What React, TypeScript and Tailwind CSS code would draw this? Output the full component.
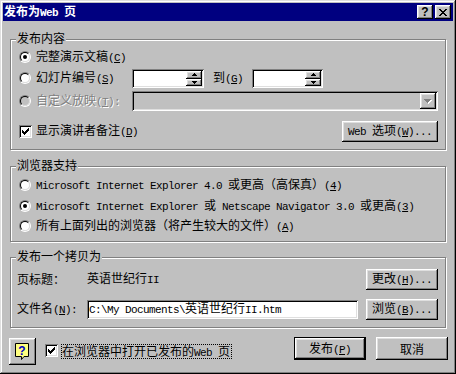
import React from "react";

const M = "font-['Liberation_Mono',monospace] text-[11px] tracking-[-0.6px]";
const RAISED =
  "bg-[#c0c0c0] shadow-[inset_-1px_-1px_#000,inset_1px_1px_#fff,inset_-2px_-2px_#808080,inset_2px_2px_#dfdfdf]";
const SUNKEN =
  "shadow-[inset_1px_1px_#808080,inset_-1px_-1px_#fff,inset_2px_2px_#000,inset_-2px_-2px_#dfdfdf]";
const ETCH = "border border-[#808080] shadow-[inset_1px_1px_#fff,1px_1px_#fff]";
const DIS = "text-[#808080] [text-shadow:1px_1px_0_#fff]";

function L({ children }: { children: React.ReactNode }) {
  return <span className={M}>{children}</span>;
}

function Acc({ k, tail = "" }: { k: string; tail?: string }) {
  return (
    <span className={M}>
      (<span className="underline underline-offset-[1px]">{k}</span>){tail}
    </span>
  );
}

function Pixels({ map, color, dx = 0, dy = 0 }: { map: string[]; color: string; dx?: number; dy?: number }) {
  const rects: React.ReactNode[] = [];
  map.forEach((row, y) => {
    for (let x = 0; x < row.length; x++) {
      if (row[x] === "X")
        rects.push(<rect key={`${x}-${y}`} x={x + dx} y={y + dy} width={1} height={1} fill={color} />);
    }
  });
  return <>{rects}</>;
}

function Radio({ checked, disabled }: { checked?: boolean; disabled?: boolean }) {
  return (
    <div className="w-[12px] h-[12px] shrink-0 rounded-full border border-t-[#808080] border-l-[#808080] border-r-white border-b-white">
      <div
        className={`w-[10px] h-[10px] rounded-full border border-t-black border-l-black border-r-[#dfdfdf] border-b-[#dfdfdf] flex items-center justify-center ${
          disabled ? "bg-[#c0c0c0]" : "bg-white"
        }`}
      >
        {checked && <div className="w-[4px] h-[4px] rounded-full bg-black" />}
      </div>
    </div>
  );
}

const CHECK = ["......X", ".....XX", "X...XXX", "XX.XXX.", "XXXXX..", ".XXX...", "..X...."];

function Check() {
  return (
    <div className={`w-[13px] h-[13px] shrink-0 bg-white ${SUNKEN}`}>
      <svg width="13" height="13" viewBox="0 0 13 13" shapeRendering="crispEdges">
        <Pixels map={CHECK} color="#000" dx={3} dy={3} />
      </svg>
    </div>
  );
}

function SpinArrow({ up }: { up?: boolean }) {
  return (
    <svg width="5" height="3" viewBox="0 0 5 3" shapeRendering="crispEdges">
      <Pixels map={up ? ["..X..", ".XXX.", "XXXXX"] : ["XXXXX", ".XXX.", "..X.."]} color="#000" />
    </svg>
  );
}

function SpinField({ w }: { w: string }) {
  return (
    <div className={`${w} h-[19px] p-[2px] bg-white ${SUNKEN} flex shrink-0`}>
      <div className="flex-1" />
      <div className="w-[16px] flex flex-col">
        <div className={`h-[8px] ${RAISED} flex items-center justify-center`}>
          <SpinArrow up />
        </div>
        <div className={`h-[7px] ${RAISED} flex items-center justify-center`}>
          <SpinArrow />
        </div>
      </div>
    </div>
  );
}

function Btn({ className, children, def }: { className: string; children: React.ReactNode; def?: boolean }) {
  if (def) {
    return (
      <div className={`${className} border border-black shrink-0 flex`}>
        <div className={`flex-1 ${RAISED} flex items-center justify-center`}>{children}</div>
      </div>
    );
  }
  return <div className={`${className} ${RAISED} shrink-0 flex items-center justify-center`}>{children}</div>;
}

function Legend({ children }: { children: React.ReactNode }) {
  return (
    <div className="absolute left-[5px] top-[-8px] px-[1px] bg-[#c0c0c0] leading-[12px] h-[13px]">{children}</div>
  );
}

const XMAP = ["XX....XX", ".XX..XX.", "..XXXX..", "...XX...", "..XXXX..", ".XX..XX.", "XX....XX"];

function TitleBar() {
  return (
    <div className="h-[18px] bg-[#000080] flex items-center pl-[1px] pr-[2px]">
      <span className="text-white font-bold text-[12px] leading-[12px]">
        发布为<span className={`${M} font-bold`}>Web </span>页
      </span>
      <div className="ml-auto flex gap-[2px]">
        <div className={`w-[16px] h-[14px] ${RAISED} flex items-center justify-center`}>
          <span className="font-['Liberation_Sans',sans-serif] font-bold text-[12px] leading-none">?</span>
        </div>
        <div className={`w-[16px] h-[14px] ${RAISED} flex items-center justify-center`}>
          <svg width="8" height="7" viewBox="0 0 8 7" shapeRendering="crispEdges">
            <Pixels map={XMAP} color="#000" />
          </svg>
        </div>
      </div>
    </div>
  );
}

function HelpIcon() {
  return (
    <svg width="15" height="18" viewBox="0 0 15 18">
      <path d="M0.5 0.5 H13.5 V13.5 H9 L6.5 16.5 V13.5 H0.5 Z" fill="#ffff80" stroke="#000" />
      <text
        x="7"
        y="11.5"
        textAnchor="middle"
        fontFamily="Liberation Sans, sans-serif"
        fontWeight="bold"
        fontSize="12"
        fill="#0000c0"
      >
        ?
      </text>
    </svg>
  );
}

export default function App() {
  return (
    <div
      className={`w-[456px] h-[374px] bg-[#c0c0c0] p-[3px] overflow-hidden text-black text-[12px] leading-[12px] font-['Noto_Sans_CJK_SC',sans-serif] shadow-[inset_-1px_-1px_#000,inset_1px_1px_#dfdfdf,inset_-2px_-2px_#808080,inset_2px_2px_#fff]`}
    >
      <TitleBar />
      <div className="flex flex-col pl-[7px]">
        {/* Group 1 */}
        <div className={`relative mt-[18px] w-[436px] h-[111px] ${ETCH} pl-[8px] pr-[7px] flex flex-col`}>
          <Legend>发布内容</Legend>
          <div className="mt-[7px] h-[20px] flex items-center">
            <Radio checked />
            <span className="ml-[5px]">
              完整演示文稿<Acc k="C" />
            </span>
          </div>
          <div className="mt-[1px] h-[20px] flex items-center">
            <Radio />
            <span className="ml-[5px] w-[96px] shrink-0">
              幻灯片编号<Acc k="S" />
            </span>
            <SpinField w="w-[72px]" />
            <span className="ml-[9px] w-[39px] shrink-0">
              到<Acc k="G" />
            </span>
            <SpinField w="w-[71px]" />
          </div>
          <div className="mt-[3px] h-[20px] flex items-center">
            <Radio disabled />
            <span className={`ml-[5px] w-[96px] shrink-0 ${DIS}`}>
              自定义放映<Acc k="T" tail=":" />
            </span>
            <div className={`w-[306px] h-[20px] p-[2px] bg-[#c0c0c0] ${SUNKEN} flex justify-end`}>
              <div className={`w-[16px] h-[16px] ${RAISED} flex items-center justify-center`}>
                <svg width="8" height="5" viewBox="0 0 8 5" shapeRendering="crispEdges">
                  <Pixels map={["XXXXXXX", ".XXXXX.", "..XXX..", "...X..."]} color="#fff" dx={1} dy={1} />
                  <Pixels map={["XXXXXXX", ".XXXXX.", "..XXX..", "...X..."]} color="#808080" />
                </svg>
              </div>
            </div>
          </div>
          <div className="mt-[9px] h-[22px] flex items-center">
            <Check />
            <span className="ml-[4px]">
              显示演讲者备注<Acc k="D" />
            </span>
            <Btn className="ml-auto w-[96px] h-[21px]">
              <span>
                <L>Web </L>选项<Acc k="W" tail="..." />
              </span>
            </Btn>
          </div>
        </div>

        {/* Group 2 */}
        <div className={`relative mt-[16px] w-[436px] h-[76px] ${ETCH} pl-[8px] flex flex-col`}>
          <Legend>浏览器支持</Legend>
          <div className="mt-[8px] h-[20px] flex items-center">
            <Radio />
            <span className="ml-[5px]">
              <L>Microsoft Internet Explorer 4.0 </L>或更高（高保真）<Acc k="4" />
            </span>
          </div>
          <div className="mt-[1px] h-[20px] flex items-center">
            <Radio checked />
            <span className="ml-[5px]">
              <L>Microsoft Internet Explorer </L>或<L> Netscape Navigator 3.0 </L>或更高<Acc k="3" />
            </span>
          </div>
          <div className="h-[20px] flex items-center">
            <Radio />
            <span className="ml-[5px]">
              所有上面列出的浏览器（将产生较大的文件）<Acc k="A" />
            </span>
          </div>
        </div>

        {/* Group 3 */}
        <div className={`relative mt-[15px] w-[436px] h-[71px] ${ETCH} pl-[6px] pr-[7px] flex flex-col`}>
          <Legend>发布一个拷贝为</Legend>
          <div className="mt-[10px] h-[22px] flex items-center">
            <span className="w-[70px] shrink-0">页标题：</span>
            <span>
              英语世纪行<L>II</L>
            </span>
            <Btn className="ml-auto w-[72px] h-[21px]">
              <span>
                更改<Acc k="H" tail="..." />
              </span>
            </Btn>
          </div>
          <div className="mt-[8px] h-[22px] flex items-center">
            <span className="w-[70px] shrink-0">
              文件名<Acc k="N" tail=":" />
            </span>
            <div className={`w-[271px] h-[19px] bg-white ${SUNKEN} flex items-center pl-[2px] shrink-0`}>
              <span>
                <L>C:\My Documents\</L>英语世纪行<L>II.htm</L>
              </span>
            </div>
            <Btn className="ml-auto w-[72px] h-[21px]">
              <span>
                浏览<Acc k="B" tail="..." />
              </span>
            </Btn>
          </div>
        </div>

        {/* Bottom row */}
        <div className="mt-[9px] w-[438px] h-[28px] flex items-start">
          <Btn className="ml-[-1px] mt-[1px] w-[27px] h-[27px]">
            <HelpIcon />
          </Btn>
          <div className="ml-[9px] mt-[7px]">
            <Check />
          </div>
          <div className="ml-[3px] mt-[7px] h-[15px] border border-dotted border-black flex items-center pr-[1px]">
            <span>
              在浏览器中打开已发布的<L>Web </L>页
            </span>
          </div>
          <Btn def className="ml-auto w-[72px] h-[23px]">
            <span>
              发布<Acc k="P" />
            </span>
          </Btn>
          <Btn className="ml-[10px] w-[72px] h-[23px]">
            <span>取消</span>
          </Btn>
        </div>
      </div>
    </div>
  );
}
